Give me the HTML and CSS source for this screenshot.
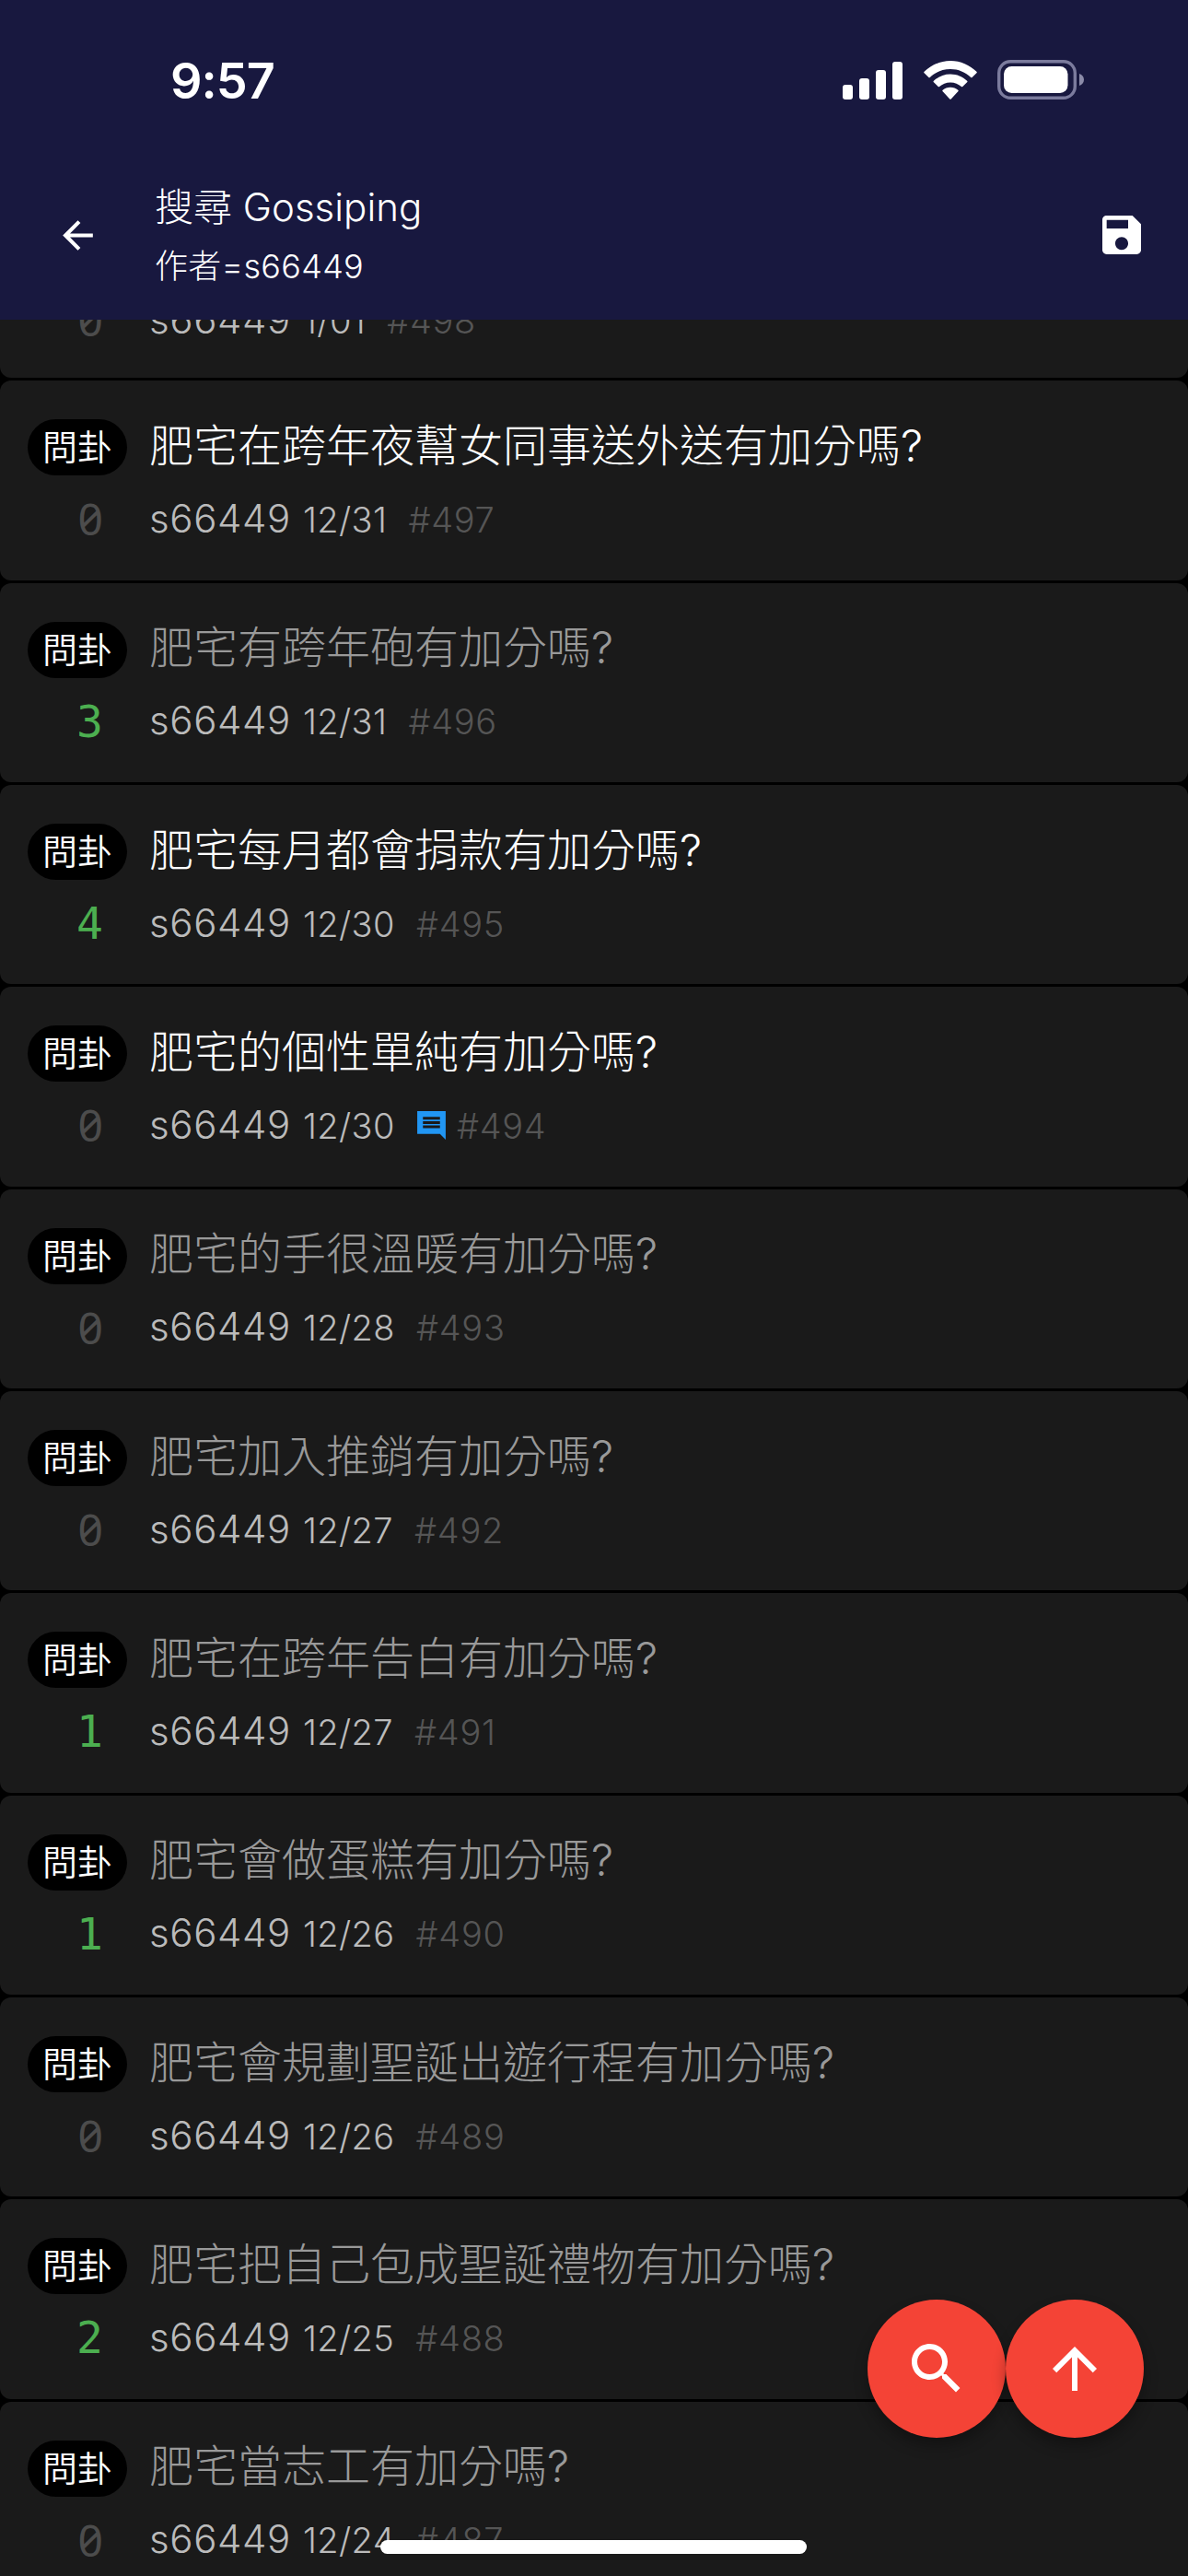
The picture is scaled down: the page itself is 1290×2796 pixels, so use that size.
FILE: index.html
```html
<!DOCTYPE html>
<html lang="zh-Hant">
<head>
  <meta charset="UTF-8">
  <meta name="viewport" content="width=device-width, initial-scale=1.0">
  <title>搜尋 Gossiping</title>
  <link rel="stylesheet" href="styles.css">
</head>
<body>
  <div class="screen">
    <header>
      <div class="status-bar">
        <span class="time">9:57</span>
        <div class="status-icons">
          <svg class="signal" viewBox="0 0 66 42">
            <rect x="0" y="26" width="11" height="16" rx="3"/>
            <rect x="18" y="19" width="11" height="23" rx="3"/>
            <rect x="36" y="10" width="11" height="32" rx="3"/>
            <rect x="54" y="1" width="11" height="41" rx="3"/>
          </svg>
          <svg class="wifi" viewBox="0 0 58 42">
            <path d="M29 0C18 0 8 4.600 .6 11.800a1 1 0 0 0 0 1.500L5.400 18a1 1 0 0 0 1.400 0C12.600 12.400 20.400 9 29 9s16.400 3.400 22.200 9a1 1 0 0 0 1.400 0l4.800-4.700a1 1 0 0 0 0-1.500C50 4.600 40 0 29 0z"/>
            <path d="M29 14.500c-7 0-13.400 2.800-18.100 7.200a1 1 0 0 0 0 1.500l4.800 4.800a1 1 0 0 0 1.400 0c3.100-2.800 7.300-4.600 11.900-4.600s8.800 1.800 11.900 4.600a1 1 0 0 0 1.400 0l4.800-4.800a1 1 0 0 0 0-1.500C42.400 17.300 36 14.500 29 14.500z"/>
            <path d="M29 28.700c-3.200 0-6.100 1.200-8.300 3.100a1 1 0 0 0 0 1.500l7.600 8.100a1 1 0 0 0 1.400 0l7.600-8.100a1 1 0 0 0 0-1.500c-2.200-1.900-5.100-3.100-8.300-3.100z"/>
          </svg>
          <svg class="battery" viewBox="0 0 95 43">
            <rect class="battery-case" x="1.700" y="1.700" width="82.600" height="39.600" rx="12.500"/>
            <path class="battery-tip" d="M89 15c3 1 5 3.500 5 6.500s-2 5.500-5 6.500z"/>
            <rect x="7" y="7" width="69.500" height="29" rx="8.500"/>
          </svg>
        </div>
      </div>
      <div class="toolbar">
        <svg class="back-btn" viewBox="0 0 24 24"><path d="M20 11H7.830l5.590-5.590L12 4l-8 8 8 8 1.410-1.410L7.830 13H20v-2z"/></svg>
        <div class="heading">
          <div class="board">搜尋 Gossiping</div>
          <div class="filter">作者=s66449</div>
        </div>
        <svg class="save-btn" viewBox="0 0 24 24"><path d="M17 3H5c-1.110 0-2 .9-2 2v14c0 1.100.89 2 2 2h14c1.100 0 2-.9 2-2V7l-4-4zm-5 16c-1.660 0-3-1.340-3-3s1.340-3 3-3 3 1.340 3 3-1.340 3-3 3zm3-10H5V5h10v4z"/></svg>
      </div>
    </header>
    <main id="post-list">
      <!-- Posts will be injected here -->
    </main>
    <div class="fabs">
      <div class="fab">
        <svg viewBox="0 0 24 24"><path d="M15.500 14h-.79l-.28-.27C15.410 12.590 16 11.110 16 9.500 16 5.910 13.090 3 9.500 3S3 5.910 3 9.500 5.910 16 9.500 16c1.610 0 3.090-.59 4.230-1.570l.27.28v.79l5 4.990L20.490 19l-4.990-5zm-6 0C7.010 14 5 11.990 5 9.500S7.010 5 9.500 5 14 7.010 14 9.500 11.990 14 9.500 14z"/></svg>
      </div>
      <div class="fab">
        <svg viewBox="0 0 24 24"><path d="M4 12l1.410 1.410L11 7.830V20h2V7.830l5.580 5.590L20 12l-8-8-8 8z"/></svg>
      </div>
    </div>
    <div class="home-indicator"></div>
  </div>
  <script>
    const posts = [
      { no: 498, title: "", count: 0, date: "1/01" },
      { no: 497, title: "肥宅在跨年夜幫女同事送外送有加分嗎?", count: 0, date: "12/31", unread: true },
      { no: 496, title: "肥宅有跨年砲有加分嗎?", count: 3, date: "12/31" },
      { no: 495, title: "肥宅每月都會捐款有加分嗎?", count: 4, date: "12/30", unread: true },
      { no: 494, title: "肥宅的個性單純有加分嗎?", count: 0, date: "12/30", unread: true, comment: true },
      { no: 493, title: "肥宅的手很溫暖有加分嗎?", count: 0, date: "12/28" },
      { no: 492, title: "肥宅加入推銷有加分嗎?", count: 0, date: "12/27" },
      { no: 491, title: "肥宅在跨年告白有加分嗎?", count: 1, date: "12/27" },
      { no: 490, title: "肥宅會做蛋糕有加分嗎?", count: 1, date: "12/26" },
      { no: 489, title: "肥宅會規劃聖誕出遊行程有加分嗎?", count: 0, date: "12/26" },
      { no: 488, title: "肥宅把自己包成聖誕禮物有加分嗎?", count: 2, date: "12/25" },
      { no: 487, title: "肥宅當志工有加分嗎?", count: 0, date: "12/24" }
    ];
    const commentIcon = '<svg class="comment-icon" viewBox="0 0 24 24"><path d="M22 2H2v16h16l4 4V2zm-4 12H6v-2h12v2zm0-3H6V9h12v2zm0-3H6V6h12v2z"/></svg>';

    // Render posts
    const list = document.getElementById('post-list');
    posts.forEach(post => {
      const row = document.createElement('article');
      row.className = post.unread ? 'post unread' : 'post';
      row.innerHTML = `
        <div class="tag">問卦</div>
        <div class="title">${post.title}</div>
        <div class="count ${post.count ? 'pushed' : ''}">${post.count}</div>
        <div class="meta">
          <span class="author">s66449</span>
          <span class="date">${post.date}</span>
          ${post.comment ? commentIcon : ''}
          <span class="number">#${post.no}</span>
        </div>
      `;
      list.appendChild(row);
    });
  </script>
</body>
</html>
```

FILE: styles.css
```css
:root {
  --bar: #18183f;
  --card: #1a1a1a;
  --accent: #f44336;
  --green: #4caf50;
  --blue: #2196f3;
}
* { box-sizing: border-box; }
body {
  margin: 0;
  background: #000;
  color: #fff;
  font-family: Inter, "Noto Sans CJK TC", sans-serif;
  font-weight: 300;
}
svg { fill: #fff; display: block; flex: none; }
.screen {
  position: relative;
  width: 1290px;
  height: 2796px;
  overflow: hidden;
}
header {
  position: relative;
  z-index: 1;
  height: 347px;
  background: var(--bar);
}
.status-bar {
  height: 173px;
  padding: 0 112px 0 185px;
  display: flex;
  justify-content: space-between;
  align-items: center;
}
.time {
  font-size: 54px;
  font-weight: 600;
  letter-spacing: -1px;
  padding-top: 1px;
}
.status-icons {
  display: flex;
  align-items: center;
  gap: 22px;
}
.signal { width: 66px; height: 42px; }
.wifi { width: 58px; height: 42px; }
.battery { width: 95px; height: 43px; }
.battery-case {
  fill: none;
  stroke: #7b7b9d;
  stroke-width: 3.400px;
}
.battery-tip { fill: #8b8ba8; }
.toolbar {
  height: 164px;
  padding: 0 44px 0 60px;
  display: flex;
  align-items: center;
}
.back-btn { width: 49px; height: 49px; }
.heading { flex: 1; margin-left: 59px; padding-top: 4px; }
.board {
  font-size: 42px;
  line-height: 64px;
}
.filter {
  font-size: 36px;
  line-height: 65px;
  letter-spacing: 0.300px;
}
.save-btn { width: 56px; height: 56px; }

/* Post list, scrolled partly under the header */
main {
  display: flex;
  flex-direction: column;
  gap: 3px;
  margin-top: -153px;
}
.post {
  flex: none;
  height: 216.350px;
  padding: 42px 0 0 30px;
  background: var(--card);
  border-radius: 12px;
  display: grid;
  grid-template-columns: 108px 1fr;
  grid-template-rows: 61px 60px;
  column-gap: 24px;
  row-gap: 17px;
  align-items: center;
}
.post:first-child { padding-top: 45px; }
.tag {
  height: 61px;
  border-radius: 31px;
  background: #000;
  font-size: 38px;
  font-weight: 350;
  line-height: 61px;
  text-align: center;
}
.title {
  font-size: 48px;
  line-height: 58px;
  padding-bottom: 4px;
  color: #999;
  white-space: nowrap;
}
.unread .title { color: #fff; }
.count {
  padding-right: 26px;
  text-align: right;
  color: #4c4c4c;
  font-family: "Noto Sans", sans-serif;
  font-feature-settings: "zero";
  font-size: 48px;
  font-weight: 400;
  line-height: 60px;
}
.count.pushed {
  color: var(--green);
  font-family: "DejaVu Sans Mono", monospace;
}
.meta {
  display: flex;
  align-items: baseline;
  line-height: 60px;
}
.author {
  font-size: 42px;
  letter-spacing: 0.600px;
  color: #bbb;
}
.date {
  font-size: 38px;
  letter-spacing: 0.400px;
  color: #bbb;
  margin-left: 13px;
}
.number {
  font-size: 38px;
  letter-spacing: 0.700px;
  color: #555;
  margin-left: 23px;
}
.comment-icon {
  width: 37px;
  height: 37px;
  margin-left: 21px;
  align-self: center;
  fill: var(--blue);
}
.comment-icon + .number { margin-left: 9px; }

/* Floating buttons */
.fabs {
  position: absolute;
  right: 48px;
  bottom: 150px;
  display: flex;
}
.fab {
  width: 150px;
  height: 150px;
  border-radius: 50%;
  background: var(--accent);
  box-shadow: 0 9px 15px rgba(0,0,0,0.3);
  display: flex;
  align-items: center;
  justify-content: center;
}
.fab svg { width: 72px; height: 72px; }
.home-indicator {
  position: absolute;
  left: 413px;
  bottom: 24px;
  width: 463px;
  height: 15px;
  border-radius: 8px;
  background: #fff;
}
```
